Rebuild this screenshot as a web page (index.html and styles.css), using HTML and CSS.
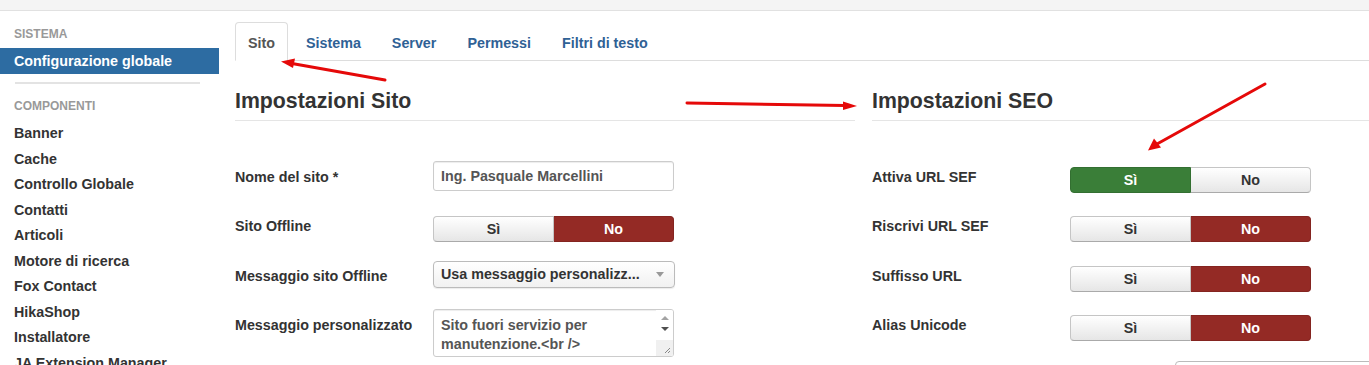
FILE: index.html
```html
<!DOCTYPE html>
<html lang="it">
<head>
<meta charset="utf-8">
<title>Configurazione globale</title>
<link rel="stylesheet" href="styles.css">
</head>
<body>
<div class="topbar"></div>
<div class="layout">
  <aside class="sidebar">
    <div class="nav-header first">Sistema</div>
    <a class="nav-item active">Configurazione globale</a>
    <div class="divider"></div>
    <div class="nav-header">Componenti</div>
    <div class="nav-list">
      <a class="nav-item">Banner</a>
      <a class="nav-item">Cache</a>
      <a class="nav-item">Controllo Globale</a>
      <a class="nav-item">Contatti</a>
      <a class="nav-item">Articoli</a>
      <a class="nav-item">Motore di ricerca</a>
      <a class="nav-item">Fox Contact</a>
      <a class="nav-item">HikaShop</a>
      <a class="nav-item">Installatore</a>
      <a class="nav-item">JA Extension Manager</a>
    </div>
  </aside>
  <main class="content">
    <ul class="tabs">
      <li class="tab active"><a>Sito</a></li>
      <li class="tab"><a>Sistema</a></li>
      <li class="tab"><a>Server</a></li>
      <li class="tab"><a>Permessi</a></li>
      <li class="tab"><a>Filtri di testo</a></li>
    </ul>
    <div class="columns">
      <section class="col">
        <h2 class="legend">Impostazioni Sito</h2>
        <div class="row">
          <label class="label">Nome del sito *</label>
          <div class="input">Ing. Pasquale Marcellini</div>
        </div>
        <div class="row">
          <label class="label">Sito Offline</label>
          <div class="btn-group">
            <span class="btn">Sì</span>
            <span class="btn on-red">No</span>
          </div>
        </div>
        <div class="row">
          <label class="label">Messaggio sito Offline</label>
          <div class="select">
            <span class="select-text">Usa messaggio personalizz...</span>
            <span class="caret"></span>
          </div>
        </div>
        <div class="row">
          <label class="label">Messaggio personalizzato</label>
          <div class="textarea">
            <div class="textarea-text">Sito fuori servizio per<br>manutenzione.&lt;br /&gt;</div>
            <div class="scrollbar">
              <span class="sb-up"></span>
              <span class="sb-down"></span>
              <span class="sb-grip">
                <svg width="8" height="8" viewBox="0 0 8 8"><path d="M7 2 L2 7 M7 5 L5 7" stroke="#888" stroke-width="1" fill="none"/></svg>
              </span>
            </div>
          </div>
        </div>
      </section>
      <section class="col">
        <h2 class="legend">Impostazioni SEO</h2>
        <div class="row">
          <label class="label">Attiva URL SEF</label>
          <div class="btn-group">
            <span class="btn on-green">Sì</span>
            <span class="btn">No</span>
          </div>
        </div>
        <div class="row">
          <label class="label">Riscrivi URL SEF</label>
          <div class="btn-group">
            <span class="btn">Sì</span>
            <span class="btn on-red">No</span>
          </div>
        </div>
        <div class="row">
          <label class="label">Suffisso URL</label>
          <div class="btn-group">
            <span class="btn">Sì</span>
            <span class="btn on-red">No</span>
          </div>
        </div>
        <div class="row">
          <label class="label">Alias Unicode</label>
          <div class="btn-group">
            <span class="btn">Sì</span>
            <span class="btn on-red">No</span>
          </div>
        </div>
        <div class="row">
          <div class="partial-input"></div>
        </div>
      </section>
    </div>
  </main>
</div>
<svg class="annotations" width="1369" height="365" viewBox="0 0 1369 365">
  <g stroke="#e50909" stroke-width="3" stroke-linecap="round" fill="none">
    <line x1="385" y1="80" x2="292" y2="63.5"/>
    <line x1="687" y1="103" x2="845" y2="105.5"/>
    <line x1="1265" y1="84" x2="1157" y2="144"/>
  </g>
  <g fill="#e50909">
    <polygon points="281,61.5 295,58.5 293,68"/>
    <polygon points="857,106 843,101.5 843,110"/>
    <polygon points="1148,150.5 1154,138.5 1161,147.5"/>
  </g>
</svg>
</body>
</html>
```
FILE: styles.css
```css
html, body {
  margin: 0;
  padding: 0;
}
body {
  width: 1369px;
  height: 365px;
  overflow: hidden;
  position: relative;
  background: #fff;
  font-family: "Liberation Sans", Arial, Helvetica, sans-serif;
  font-size: 14.3px;
  font-weight: bold;
  color: #333;
}
.topbar {
  height: 10px;
  background: #f4f4f4;
  border-bottom: 1px solid #e1e1e1;
}
.layout {
  display: flex;
  align-items: flex-start;
}
/* Sidebar */
.sidebar {
  width: 219px;
  flex-shrink: 0;
}
.nav-header {
  margin-top: 14px;
  padding: 0 14px;
  font-size: 12px;
  line-height: 16px;
  text-transform: uppercase;
  color: #999;
}
.nav-header.first {
  margin-top: 15px;
}
.nav-item {
  display: block;
  padding: 0 14px;
  line-height: 25.5px;
  color: #333;
  white-space: nowrap;
}
.nav-item.active {
  margin-top: 6px;
  line-height: 26px;
  background: #2d6ca2;
  color: #fff;
}
.divider {
  margin: 8px 19px 0 15px;
  height: 2px;
  background: #e3e3e3;
}
.nav-list {
  margin-top: 7px;
}
/* Content */
.content {
  margin-left: 16px;
  flex: 1;
  min-width: 0;
}
.tabs {
  list-style: none;
  margin: 11px 0 0;
  padding: 0;
  display: flex;
  border-bottom: 1px solid #ddd;
}
.tab {
  margin-bottom: -1px;
}
.tab a {
  display: block;
  padding: 11px 12px 8px;
  margin-right: 5px;
  line-height: 18px;
  border: 1px solid transparent;
  border-radius: 4px 4px 0 0;
  color: #2f6195;
}
.tab.active a {
  color: #555;
  background: #fff;
  border-color: #ddd #ddd transparent;
}
.columns {
  display: grid;
  grid-template-columns: 620px 1fr;
  column-gap: 17px;
}
.legend {
  margin: 28px 0 31.5px;
  padding-bottom: 7px;
  font-size: 21.3px;
  line-height: 24px;
  font-weight: bold;
  color: #333;
  border-bottom: 1px solid #e5e5e5;
}
.row {
  display: flex;
  align-items: flex-start;
  height: 49.5px;
}
.label {
  width: 198px;
  flex-shrink: 0;
  padding-top: 14px;
  line-height: 20px;
  color: #333;
}
.input {
  margin-top: 8px;
  box-sizing: border-box;
  width: 241px;
  height: 30px;
  padding: 0 7px;
  line-height: 28px;
  border: 1px solid #ccc;
  border-radius: 3px;
  color: #555;
  box-shadow: inset 0 1px 1px rgba(0,0,0,0.075);
}
.btn-group {
  margin-top: 14px;
  display: flex;
  width: 241px;
  height: 26px;
}
.btn {
  flex: 1;
  box-sizing: border-box;
  height: 26px;
  line-height: 25px;
  text-align: center;
  color: #333;
  border: 1px solid #bbb;
  background: linear-gradient(#fff, #e6e6e6);
}
.btn:first-child {
  border-radius: 4px 0 0 4px;
  border-color: #c5c5c5 #c5c5c5 #aaa;
}
.btn:last-child {
  border-radius: 0 4px 4px 0;
  border-left: none;
  border-color: #c5c5c5 #c5c5c5 #aaa;
}
.btn.on-red {
  background: #942a25;
  border-color: #842420;
  color: #fff;
}
.btn.on-green {
  background: #3a7e38;
  border-color: #336f31;
  color: #fff;
}
.select {
  margin-top: 9px;
  box-sizing: border-box;
  width: 242px;
  height: 27px;
  display: flex;
  align-items: center;
  justify-content: space-between;
  padding: 0 10px 0 7px;
  border: 1px solid #bbb;
  border-radius: 4px;
  background: linear-gradient(#fff, #f1f1f1);
  color: #333;
  box-shadow: 0 1px 1px rgba(0,0,0,0.08);
}
.caret {
  width: 0;
  height: 0;
  border-left: 4px solid transparent;
  border-right: 4px solid transparent;
  border-top: 5px solid #999;
}
.textarea {
  margin-top: 7.5px;
  box-sizing: border-box;
  width: 241px;
  height: 48px;
  display: flex;
  border: 1px solid #ccc;
  border-radius: 3px;
  box-shadow: inset 0 1px 1px rgba(0,0,0,0.075);
  overflow: hidden;
}
.textarea-text {
  flex: 1;
  padding: 6px 7px 0;
  line-height: 19px;
  color: #555;
  white-space: nowrap;
}
.scrollbar {
  width: 17px;
  flex-shrink: 0;
  display: flex;
  flex-direction: column;
  align-items: center;
  background: #fff;
}
.sb-up, .sb-down {
  width: 0;
  height: 0;
  border-left: 4px solid transparent;
  border-right: 4px solid transparent;
}
.sb-up {
  margin-top: 6px;
  border-bottom: 4px solid #a3a3a3;
}
.sb-down {
  margin-top: 7px;
  border-top: 4px solid #505050;
}
.sb-grip {
  margin-top: auto;
  width: 17px;
  height: 16px;
  background: #f0f0f0;
  display: flex;
  align-items: flex-end;
  justify-content: flex-end;
}
.sb-grip svg {
  display: block;
  margin: 0 2px 2px 0;
}
.partial-input {
  margin: 10.5px 0 0 303px;
  width: 260px;
  height: 30px;
  border: 1px solid #bbb;
  border-radius: 4px;
  flex-shrink: 0;
}
.annotations {
  position: absolute;
  top: 0;
  left: 0;
  pointer-events: none;
}
```
